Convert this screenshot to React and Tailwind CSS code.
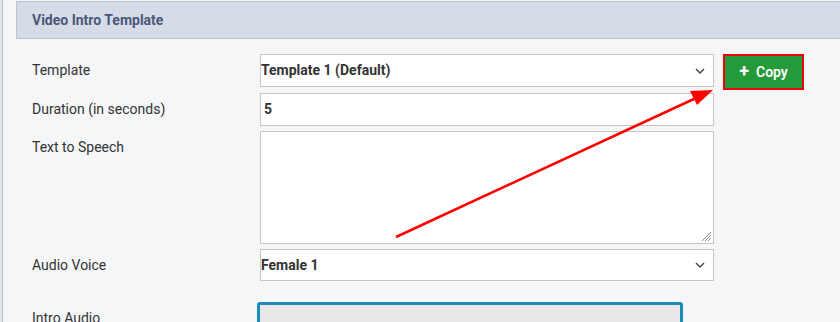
import React from 'react';

const Chevron = () => (
  <svg width="10" height="6" viewBox="0 0 10 6" className="shrink-0">
    <path d="M1 1l4 4 4-4" fill="none" stroke="#444" strokeWidth="1.4" />
  </svg>
);

const Label = ({ children, className = '' }) => (
  <div className={`shrink-0 pl-4 text-[14px] text-[#333] ${className}`}>{children}</div>
);

export default function App() {
  return (
    <div className="relative w-[840px] h-[322px] overflow-hidden bg-[#f5f6f8] font-['Roboto',sans-serif]">
      <div className="flex h-full">
        <div className="w-[2px] shrink-0 bg-[#e2e5ea]" />
        <div className="w-[1px] shrink-0 bg-[#b9bec6]" />
        <div className="flex-1 pl-[13px]">
          <div className="h-[38px] mt-[1px] border border-r-0 border-[#bcc3cd] bg-[#d5dce8] flex items-center pl-[15px]">
            <span className="text-[14px] font-bold text-[#4a5878]">Video Intro Template</span>
          </div>

          <div className="mt-[15px] flex items-start h-[33px]">
            <Label className="w-[244px] h-[33px] flex items-center">Template</Label>
            <div className="w-[454px] h-[33px] border border-[#c6c6c6] bg-white flex items-center justify-between pr-[8px]">
              <span className="text-[14px] font-bold text-[#333]">Template 1 (Default)</span>
              <Chevron />
            </div>
            <div className="ml-[9px] border-2 border-[#f00000]">
              <div className="w-[77px] h-[32px] bg-[#259a3a] flex items-center justify-center gap-[7px] text-white text-[14px] font-semibold">
                <span className="text-[18px] leading-none font-bold -mt-[2px]">+</span>
                <span>Copy</span>
              </div>
            </div>
          </div>

          <div className="mt-[6px] flex items-center">
            <Label className="w-[244px] h-[33px] flex items-center">Duration (in seconds)</Label>
            <div className="w-[454px] h-[33px] border border-[#c6c6c6] bg-white flex items-center pl-[3px]">
              <span className="text-[14px] font-bold text-[#333]">5</span>
            </div>
          </div>

          <div className="mt-[5px] flex items-start">
            <Label className="w-[244px] pt-[6px]">Text to Speech</Label>
            <div className="relative w-[454px] h-[113px] border border-[#c6c6c6] bg-white">
              <svg width="12" height="12" viewBox="0 0 12 12" className="absolute right-[1px] bottom-[1px]">
                <path d="M11 2L2 11M11 5L5 11M11 8L8 11" stroke="#888" strokeWidth="1" />
              </svg>
            </div>
          </div>

          <div className="mt-[5px] flex items-center">
            <Label className="w-[244px] h-[32px] flex items-center">Audio Voice</Label>
            <div className="w-[454px] h-[32px] border border-[#c6c6c6] bg-white flex items-center justify-between pr-[8px]">
              <span className="text-[14px] font-bold text-[#333]">Female 1</span>
              <Chevron />
            </div>
          </div>

          <div className="mt-[21px] flex items-start">
            <Label className="w-[241px] pt-[6px]">Intro Audio</Label>
            <div className="w-[426px] h-[40px] border-[3px] border-[#1b8db5] rounded-[3px] bg-[#e8e8e8]" />
          </div>
        </div>
      </div>

      <svg className="absolute inset-0 pointer-events-none" width="840" height="322">
        <line x1="396" y1="237" x2="696" y2="98" stroke="#f00" strokeWidth="2.5" />
        <polygon points="713,90 690,91 697,105" fill="#f00" />
      </svg>
    </div>
  );
}
